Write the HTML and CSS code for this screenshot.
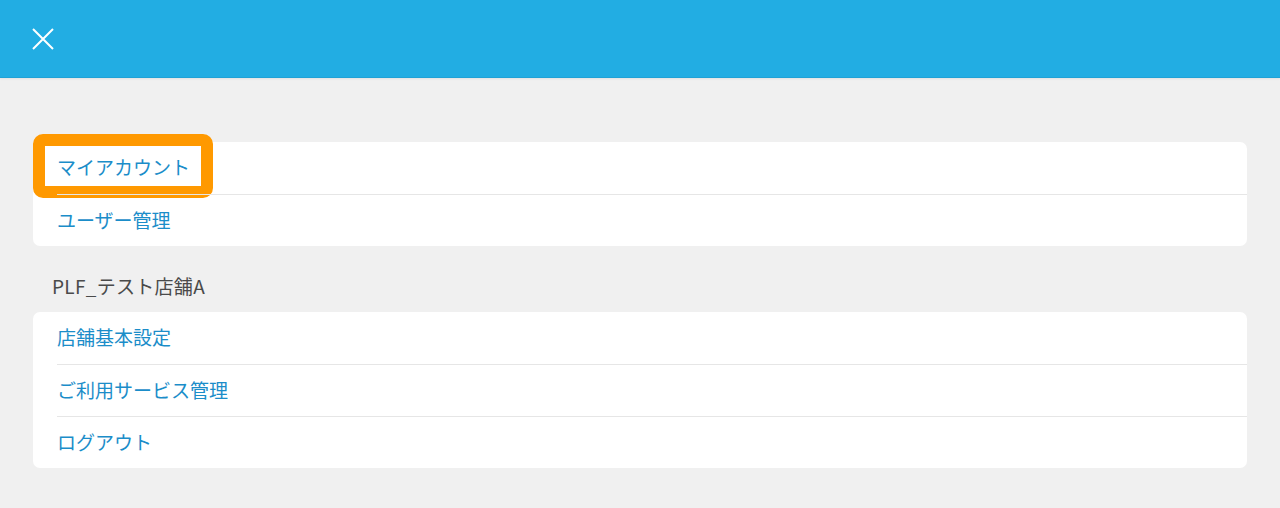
FILE: index.html
```html
<!DOCTYPE html>
<html lang="ja">
<head>
    <meta charset="UTF-8">
    <meta name="viewport" content="width=device-width, initial-scale=1.0">
    <title>メニュー</title>
    <link rel="stylesheet" href="styles.css">
</head>
<body>
    <header class="top-bar">
        <button class="close-btn" aria-label="閉じる">
            <svg width="22" height="22" viewBox="0 0 22 22">
                <path d="M1 1 L21 21 M21 1 L1 21" stroke="#fff" stroke-width="2" fill="none"/>
            </svg>
        </button>
    </header>

    <main class="menu">
        <ul class="menu-card">
            <li class="menu-item">
                <a href="#">マイアカウント</a>
                <span class="highlight"></span>
            </li>
            <li class="menu-item"><a href="#">ユーザー管理</a></li>
        </ul>

        <h2 class="shop-name">PLF_テスト店舗A</h2>

        <ul class="menu-card">
            <li class="menu-item"><a href="#">店舗基本設定</a></li>
            <li class="menu-item"><a href="#">ご利用サービス管理</a></li>
            <li class="menu-item"><a href="#">ログアウト</a></li>
        </ul>
    </main>
</body>
</html>
```

FILE: styles.css
```css
body {
    margin: 0;
    background-color: #f0f0f0;
    font-family: "Noto Sans CJK JP", "Noto Sans", sans-serif;
}

.top-bar {
    height: 77px;
    background-color: #22ade3;
    border-bottom: 1px solid #1fa2d6;
    box-shadow: 0 1px 2px rgba(0, 0, 0, 0.06);
    display: flex;
    align-items: center;
    padding-left: 32px;
}

.close-btn {
    background: none;
    border: none;
    padding: 0;
    width: 22px;
    height: 22px;
    cursor: pointer;
    display: flex;
}

.menu {
    padding: 64px 33px 0;
}

.menu-card {
    list-style: none;
    margin: 0;
    padding: 0;
    background-color: #fff;
    border-radius: 7px;
}

.menu-item {
    position: relative;
    height: 52px;
    box-sizing: border-box;
    margin-left: 24px;
    padding-bottom: 3px;
    display: flex;
    align-items: center;
}

.menu-item + .menu-item {
    border-top: 1px solid #e6e6e6;
}

.menu-item a {
    color: #1b8dc9;
    text-decoration: none;
    font-size: 19px;
}

.shop-name {
    margin: 24px 0 8px;
    padding-left: 19px;
    font-size: 19px;
    font-weight: normal;
    line-height: 32px;
    padding-bottom: 2px;
    letter-spacing: 0.3px;
    color: #4a4a4a;
}

/* annotation box drawn over the first item */
.highlight {
    position: absolute;
    left: -24px;
    top: -8px;
    width: 180px;
    height: 64px;
    box-sizing: border-box;
    border: 12px solid #ff9900;
    border-radius: 10px;
    pointer-events: none;
}
```
